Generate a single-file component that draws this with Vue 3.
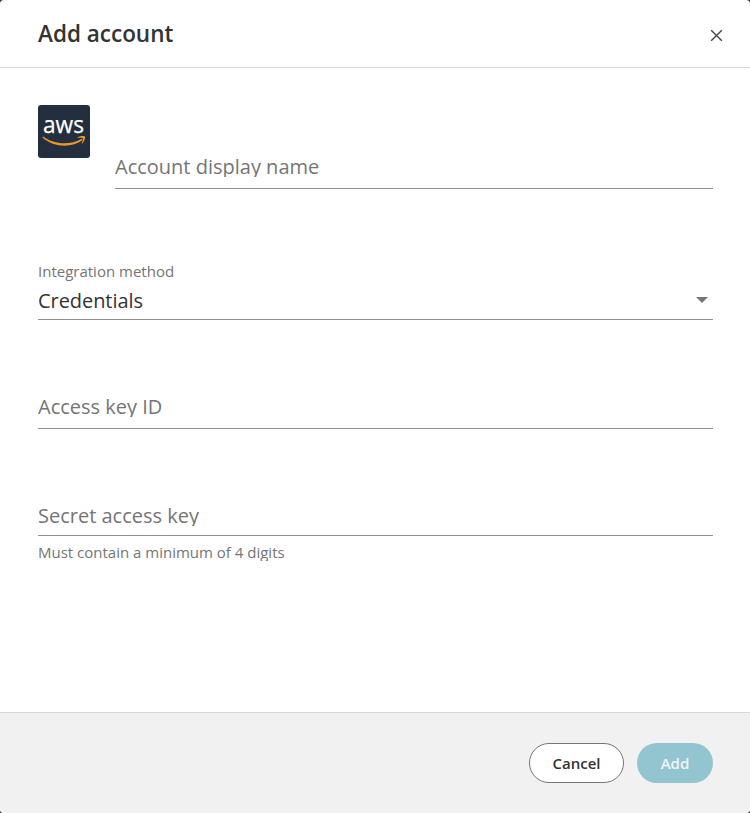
<script setup>
import { ref } from 'vue'

const title = ref('Add account')
const method = ref('Credentials')
</script>

<template>
  <div class="backdrop">
    <section class="dialog" role="dialog" aria-labelledby="dialog-title">
      <header class="head">
        <h1 id="dialog-title" class="title">{{ title }}</h1>
        <button class="close" type="button" aria-label="Close">
          <svg width="13" height="13" viewBox="0 0 13 13">
            <path d="M1.2 1.2 11.8 11.8M11.8 1.2 1.2 11.8" fill="none" stroke="#444" stroke-width="1.4" />
          </svg>
        </button>
      </header>

      <main class="body">
        <div class="identity">
          <svg class="logo" width="52" height="53" viewBox="0 0 52 53">
            <rect width="52" height="53" rx="3" fill="#232f3e" />
            <text class="logo-text" x="25.500" y="27.500" text-anchor="middle" textLength="41" lengthAdjust="spacingAndGlyphs">aws</text>
            <path d="M5 31.6C17 40.2 32.5 40.2 43.8 33.8L44.7 35C33 43.5 15.500 42.200 4.400 32.400Z" fill="#ef952b" />
            <path d="M39.600 32.500C42.200 30.700 46.500 30.800 47 31.500C47.500 32.400 46.500 36.500 44.200 38.700C43.800 39 43.500 38.800 43.700 38.400C44.500 36.500 45.400 34 44.900 33.200C44.300 32.500 41.800 32.800 40 33C39.400 33 39.300 32.700 39.600 32.500Z" fill="#ef952b" />
          </svg>
          <div class="field name">
            <span class="label">Account display name</span>
          </div>
        </div>

        <div class="field method">
          <span class="label floating">Integration method</span>
          <div class="select">
            <span class="value">{{ method }}</span>
            <svg class="arrow" width="12" height="6" viewBox="0 0 12 6"><path d="M0 0H12L6 6Z" fill="#757575" /></svg>
          </div>
        </div>

        <div class="field key">
          <span class="label">Access key ID</span>
        </div>

        <div class="field secret">
          <span class="label">Secret access key</span>
        </div>
        <span class="label small hint">Must contain a minimum of 4 digits</span>
      </main>

      <footer class="foot">
        <button class="btn cancel" type="button">Cancel</button>
        <button class="btn add" type="button" disabled>Add</button>
      </footer>
    </section>
  </div>
</template>

<style>
body {
  background: #333;
}
</style>

<style scoped>
.backdrop {
  background: #333;
  font-family: "Open Sans", sans-serif;
}
.dialog {
  box-sizing: border-box;
  display: flex;
  flex-direction: column;
  width: 750px;
  height: 813px;
  border-radius: 4px;
  overflow: hidden;
  background: #fff;
}
.head {
  box-sizing: border-box;
  display: flex;
  align-items: flex-start;
  justify-content: space-between;
  height: 68px;
  padding: 17px 27px 0 38px;
  border-bottom: 1px solid #d9d9d9;
}
.title {
  margin: 0;
  padding-top: 1px;
  color: #333;
  font-size: 22.5px;
  font-weight: 600;
  line-height: 32px;
}
.close {
  display: flex;
  margin: 12px 0 0;
  padding: 0;
  border: 0;
  background: none;
}
.body {
  display: flex;
  flex: 1;
  flex-direction: column;
  padding: 37px 37px 0 38px;
}
.identity {
  display: flex;
  gap: 25px;
}
.logo {
  flex: none;
}
.logo-text {
  fill: #fff;
  stroke: #fff;
  stroke-width: 0.25px;
  font-family: "Open Sans", sans-serif;
  font-size: 23px;
  font-weight: 500;
}
.field {
  box-sizing: border-box;
  display: flex;
  flex-direction: column;
  border-bottom: 1px solid #8f8f8f;
}
.label {
  flex: none;
  height: 21px;
  overflow: hidden;
  color: #757575;
  font-size: 20px;
  line-height: 22.5px;
  white-space: nowrap;
}
.label.small {
  height: 17px;
  font-size: 15px;
  line-height: 17px;
}
.label.floating {
  height: 22.5px;
  margin-bottom: -5.5px;
  transform: translateY(0.75px) scale(0.75);
  transform-origin: 0 0;
}
.name {
  flex: 1;
  height: 84px;
  padding-top: 51px;
}
.method {
  height: 57px;
  margin-top: 74px;
}
.select {
  display: flex;
  align-items: center;
  justify-content: space-between;
  height: 28px;
  margin-top: 6px;
  padding-right: 5px;
}
.value {
  padding-top: 2px;
  color: #333;
  font-size: 20px;
  letter-spacing: -0.06px;
  line-height: 28px;
}
.key {
  height: 33px;
  margin-top: 76px;
}
.secret {
  height: 31px;
  margin-top: 76px;
}
.hint {
  margin-top: 8px;
}
.foot {
  box-sizing: border-box;
  display: flex;
  align-items: flex-start;
  justify-content: flex-end;
  gap: 13px;
  height: 101px;
  padding: 30px 37px 0;
  border-top: 1px solid #d6d6d6;
  background: #f1f1f1;
}
.btn {
  box-sizing: border-box;
  height: 40px;
  padding: 0;
  border-radius: 20px;
  font-family: inherit;
  font-size: 15px;
  font-weight: 600;
}
.cancel {
  width: 95px;
  border: 1px solid #757575;
  background: #fff;
  color: #333;
}
.add {
  width: 76px;
  border: 0;
  background: #92c5d0;
  color: #f1f5f6;
}
</style>
